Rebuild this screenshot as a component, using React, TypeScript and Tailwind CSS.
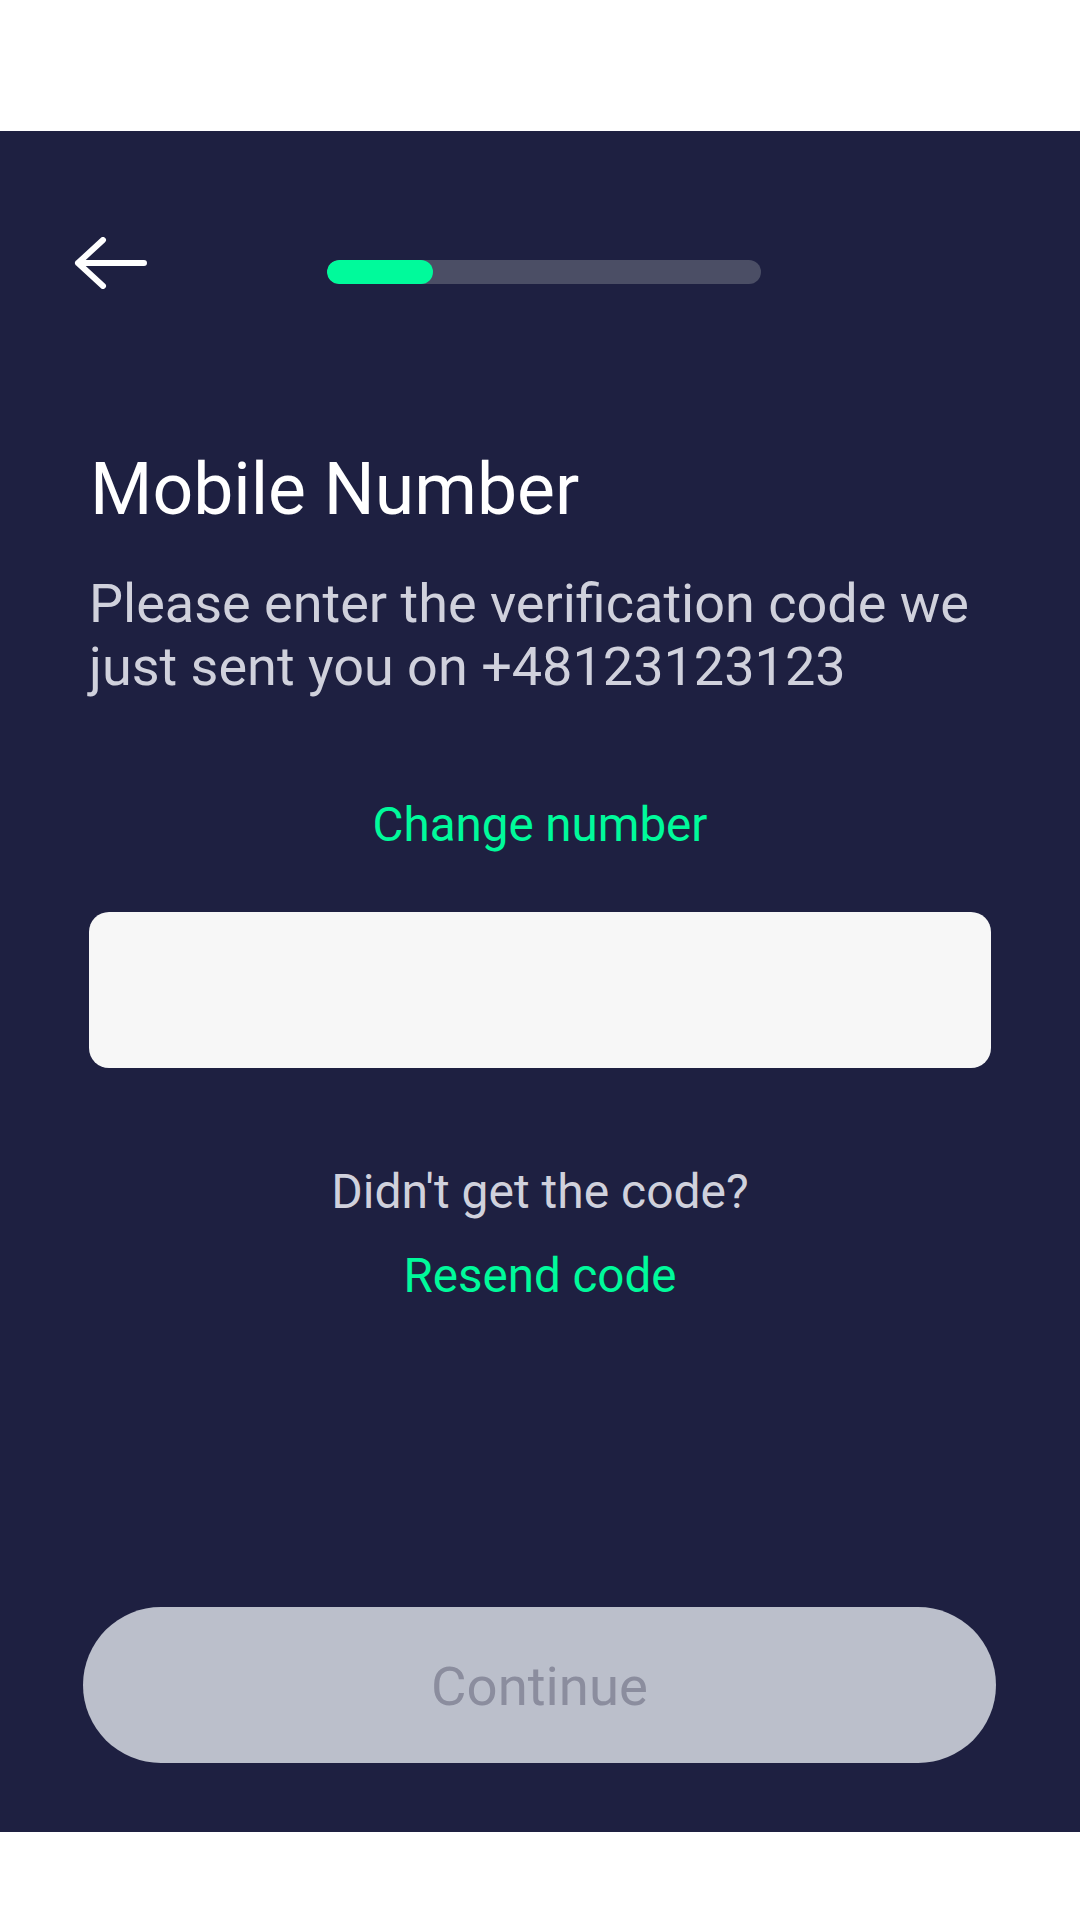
import React from "react";

export default function App() {
  return (
    <div
      className="w-[1080px] h-[1920px] bg-white flex flex-col"
      style={{ fontFamily: "Roboto, 'Noto Sans', sans-serif" }}
    >
      <div className="h-[131px] bg-white" />
      <div className="h-[1701px] bg-[#1e2041] flex flex-col">
        {/* header */}
        <div className="flex items-start pt-[106px] pl-[74px]">
          <svg width="73" height="52" viewBox="0 0 73 52" fill="none">
            <path
              d="M70 26H4M29 3L4 26L29 49"
              stroke="#ffffff"
              strokeWidth="6"
              strokeLinecap="round"
              strokeLinejoin="round"
            />
          </svg>
          <div className="ml-[180px] mt-[23px] w-[434px] h-[24px] rounded-full bg-[#4b4e65] overflow-hidden">
            <div className="w-[106px] h-full rounded-full bg-[#00fa9b]" />
          </div>
        </div>

        <div className="px-[89px] flex flex-col">
          <h1 className="mt-[159px] text-[71.5px] leading-[84px] text-white font-normal pl-[1px]">
            Mobile Number
          </h1>
          <p className="mt-[40px] text-[54px] leading-[63px] text-[#d0d1dc]">
            Please enter the verification code we just sent you on +48123123123
          </p>
          <div className="mt-[99px] text-center text-[47.5px] leading-[56px] text-[#00fa9b]">
            Change number
          </div>
          <div className="mt-[59px] h-[156px] w-full rounded-[20px] bg-[#f7f7f7]" />
          <div className="mt-[96px] text-center text-[48px] leading-[56px] text-[#d0d1dc]">
            Didn&apos;t get the code?
          </div>
          <div className="mt-[28px] text-center text-[47.5px] leading-[56px] text-[#00fa9b]">
            Resend code
          </div>
        </div>

        <div className="mt-auto pb-[69px] pl-[83px] pr-[84px]">
          <button className="w-full h-[156px] rounded-full bg-[#bbbfcb] text-[54.5px] text-[#8b8d9e] flex items-center justify-center pt-[4px]">
            Continue
          </button>
        </div>
      </div>
      <div className="flex-1 bg-white" />
    </div>
  );
}
